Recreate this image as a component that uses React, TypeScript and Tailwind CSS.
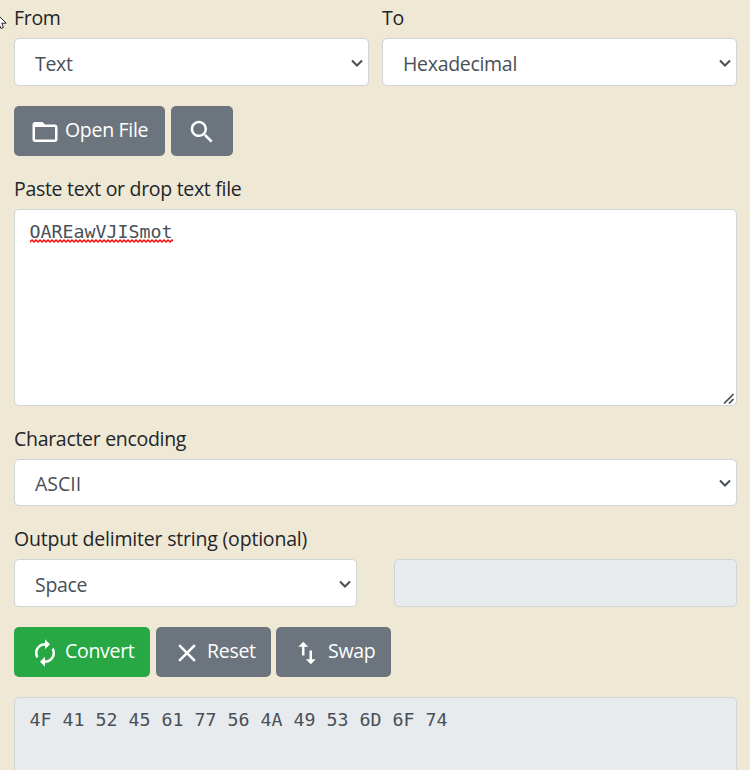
import type { ReactNode } from "react";

function Icon({ d, className = "" }: { d: string; className?: string }) {
  return (
    <svg viewBox="0 0 24 24" className={`size-[30px] shrink-0 ${className}`} fill="currentColor" aria-hidden="true">
      <path d={d} />
    </svg>
  );
}

const icons = {
  folder:
    "M20 18H4V8h16m0-2h-8l-2-2H4c-1.11 0-2 .89-2 2v12c0 1.1.9 2 2 2h16c1.1 0 2-.9 2-2V8c0-1.11-.9-2-2-2z",
  search:
    "M15.5 14h-.79l-.28-.27C15.41 12.59 16 11.11 16 9.5 16 5.91 13.09 3 9.5 3S3 5.91 3 9.5 5.91 16 9.5 16c1.61 0 3.09-.59 4.23-1.57l.27.28v.79l5 4.99L20.49 19l-4.99-5zm-6 0C7.01 14 5 11.99 5 9.5S7.01 5 9.5 5 14 7.01 14 9.5 11.99 14 9.5 14z",
  convert:
    "M12 6v3l4-4-4-4v3c-4.42 0-8 3.58-8 8 0 1.57.46 3.03 1.24 4.26L6.7 14.8c-.45-.83-.7-1.79-.7-2.8 0-3.31 2.69-6 6-6zm6.76 1.74L17.3 9.2c.44.84.7 1.79.7 2.8 0 3.31-2.69 6-6 6v-3l-4 4 4 4v-3c4.42 0 8-3.58 8-8 0-1.57-.46-3.03-1.24-4.26z",
  close:
    "M19 6.41L17.59 5 12 10.59 6.41 5 5 6.41 10.59 12 5 17.59 6.41 19 12 13.41 17.59 19 19 17.59 13.41 12z",
  swap: "M9 3L5 6.99h3V14h2V6.99h3L9 3zm7 14.01V10h-2v7.01h-3L15 21l4-3.99h-3z",
};

function Label({ children, className = "" }: { children: ReactNode; className?: string }) {
  return <div className={`h-[30px] leading-[30px] whitespace-nowrap text-[#212529] ${className}`}>{children}</div>;
}

function Select({
  value,
  className = "",
  textClassName = "pt-1",
}: {
  value: string;
  className?: string;
  textClassName?: string;
}) {
  return (
    <div
      className={`flex items-center justify-between rounded-[5px] border border-[#ced4da] bg-white pr-[5px] pl-5 text-[#495057] ${className}`}
    >
      <span className={`leading-[30px] ${textClassName}`}>{value}</span>
      <svg viewBox="0 0 12 8" className="mt-px h-2 w-3" fill="none" stroke="#495057" strokeWidth="2.1" aria-hidden="true">
        <path d="M1 1.5 6 6.5 11 1.5" />
      </svg>
    </div>
  );
}

function Button({ children, className = "" }: { children: ReactNode; className?: string }) {
  return (
    <button
      type="button"
      className={`flex h-[50px] items-center rounded-[5px] pl-4 whitespace-nowrap text-white ${className}`}
    >
      {children}
    </button>
  );
}

export default function App() {
  return (
    <div className="relative h-[770px] w-[750px] overflow-hidden bg-[#efe8d5] pr-[13px] pl-[14px] font-['Open_Sans','Noto_Sans',sans-serif] text-[19.5px] tracking-[-0.3px]">
      <svg className="absolute top-[12px] left-0 h-[18px] w-[7px]" viewBox="0 0 7 18" aria-hidden="true">
        <path d="M-5 0V16L-.8 12.5 1 16.5 3.4 15.4 1.8 11.2H6.2Z" fill="#fff" stroke="#222" />
      </svg>

      <div className="flex gap-[13px] pt-[3px]">
        <div className="w-[355px]">
          <Label>From</Label>
          <Select value="Text" className="mt-[5px] h-12" />
        </div>
        <div className="w-[355px]">
          <Label>To</Label>
          <Select value="Hexadecimal" className="mt-[5px] h-12" />
        </div>
      </div>

      <div className="mt-5 flex gap-1.5">
        <Button className="w-[151px] bg-[#6c757d]">
          <Icon d={icons.folder} className="mt-px" />
          <span className="ml-[5px] pb-0.5">Open File</span>
        </Button>
        <Button className="w-[62px] bg-[#6c757d]">
          <Icon d={icons.search} className="mt-px" />
        </Button>
      </div>

      <Label className="mt-[18px]">Paste text or drop text file</Label>
      <div className="relative mt-[5px] h-[197px] rounded-[5px] border border-[#ced4da] bg-white px-[14.5px] pt-[7px] font-['DejaVu_Sans_Mono',monospace] text-[18.27px] leading-[30px] tracking-normal text-[#495057]">
        OAREawVJISmot
        <svg className="absolute top-[29px] left-[15px] h-1 w-[143px]" aria-hidden="true">
          <defs>
            <pattern id="wave" width="4" height="4" patternUnits="userSpaceOnUse">
              <path d="M-1 2 0 3 2 1 4 3 5 2" fill="none" stroke="#f00" strokeWidth="1.3" />
            </pattern>
          </defs>
          <rect width="143" height="4" fill="url(#wave)" />
        </svg>
        <svg className="absolute right-[2px] bottom-[1px] size-[11px]" viewBox="0 0 11 11" stroke="#495057" strokeWidth="1.7" aria-hidden="true">
          <path d="M1 10.5 10.5 1M6 10.5 10.5 6" />
        </svg>
      </div>

      <Label className="mt-[18px]">Character encoding</Label>
      <Select value="ASCII" className="mt-[5px] h-[47px]" textClassName="pt-0.5 tracking-normal" />

      <Label className="mt-[18px] tracking-[-0.2px]">Output delimiter string (optional)</Label>
      <div className="mt-[5px] flex gap-[37px]">
        <Select value="Space" className="h-12 w-[343px]" />
        <div className="h-12 w-[343px] rounded-[5px] border border-[#ced4da] bg-[#e8ebee]" />
      </div>

      <div className="mt-5 flex">
        <Button className="w-[136px] bg-[#28a745]">
          <Icon d={icons.convert} className="mt-px" />
          <span className="ml-[5px] pb-0.5">Convert</span>
        </Button>
        <Button className="ml-1.5 w-[115px] bg-[#6c757d]">
          <Icon d={icons.close} className="mt-px" />
          <span className="ml-[5px] pb-0.5">Reset</span>
        </Button>
        <Button className="ml-[5px] w-[115px] bg-[#6c757d]">
          <Icon d={icons.swap} className="mt-px" />
          <span className="ml-1.5 pb-0.5">Swap</span>
        </Button>
      </div>

      <div className="mt-5 h-[120px] rounded-[5px] border border-[#ced4da] bg-[#e8ebee] px-[14.5px] pt-[7px] font-['DejaVu_Sans_Mono',monospace] text-[18.27px] leading-[30px] tracking-normal text-[#495057]">
        4F 41 52 45 61 77 56 4A 49 53 6D 6F 74
      </div>
    </div>
  );
}
